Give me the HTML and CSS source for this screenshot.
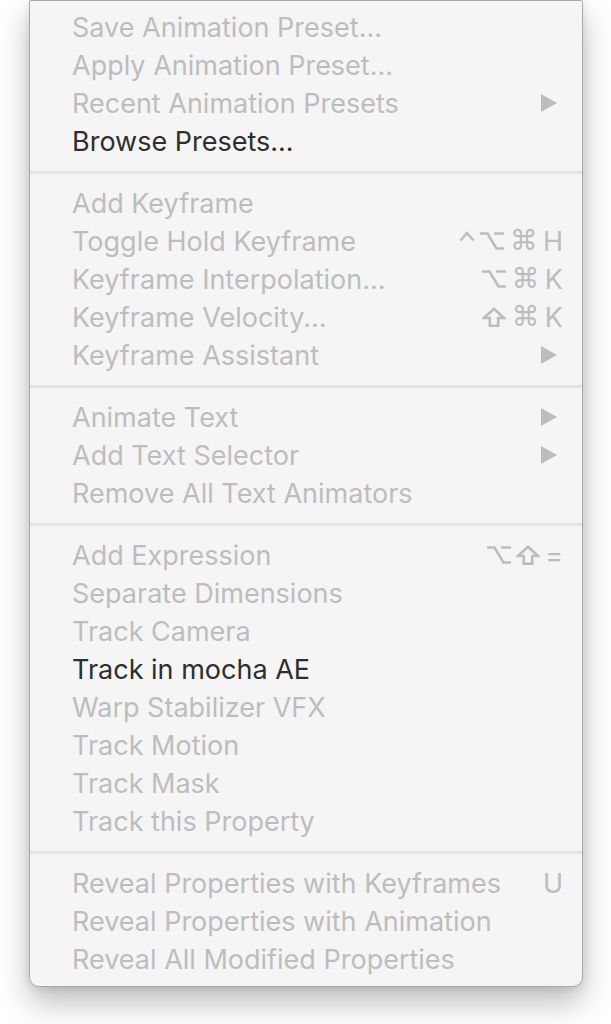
FILE: index.html
```html
<!DOCTYPE html>
<html>
<head>
<meta charset="utf-8">
<link rel="stylesheet" href="styles.css">
</head>
<body>
<div class="menu">
  <div class="group">
    <div class="item dis"><span class="label">Save Animation Preset...</span></div>
    <div class="item dis"><span class="label">Apply Animation Preset...</span></div>
    <div class="item dis"><span class="label">Recent Animation Presets</span><span class="arrow"></span></div>
    <div class="item"><span class="label">Browse Presets...</span></div>
  </div>
  <div class="sep"></div>
  <div class="group">
    <div class="item dis"><span class="label">Add Keyframe</span></div>
    <div class="item dis"><span class="label">Toggle Hold Keyframe</span>
      <span class="key">
        <svg class="ic ctrl" width="16" height="20" viewBox="0 0 16 20"><polyline points="1.5,10.5 8,3 14.5,10.5"/></svg>
        <svg class="ic" width="24" height="20" viewBox="0 0 24 20"><path d="M0 2.5H7.5L16.5 17.5H24M14 2.5H24"/></svg>
        <span class="cmd">⌘</span><span class="ch">H</span>
      </span>
    </div>
    <div class="item dis"><span class="label">Keyframe Interpolation...</span>
      <span class="key">
        <svg class="ic" width="24" height="20" viewBox="0 0 24 20"><path d="M0 2.5H7.5L16.5 17.5H24M14 2.5H24"/></svg>
        <span class="cmd">⌘</span><span class="ch">K</span>
      </span>
    </div>
    <div class="item dis"><span class="label">Keyframe Velocity...</span>
      <span class="key">
        <svg class="ic" width="24" height="20" viewBox="0 0 24 20"><polygon points="12,1.8 22,11 16.2,11 16.2,18.7 7.8,18.7 7.8,11 2,11"/></svg>
        <span class="cmd">⌘</span><span class="ch">K</span>
      </span>
    </div>
    <div class="item dis"><span class="label">Keyframe Assistant</span><span class="arrow"></span></div>
  </div>
  <div class="sep"></div>
  <div class="group">
    <div class="item dis"><span class="label">Animate Text</span><span class="arrow"></span></div>
    <div class="item dis"><span class="label">Add Text Selector</span><span class="arrow"></span></div>
    <div class="item dis"><span class="label">Remove All Text Animators</span></div>
  </div>
  <div class="sep"></div>
  <div class="group">
    <div class="item dis"><span class="label">Add Expression</span>
      <span class="key">
        <svg class="ic" width="24" height="20" viewBox="0 0 24 20"><path d="M0 2.5H7.5L16.5 17.5H24M14 2.5H24"/></svg>
        <svg class="ic" width="24" height="20" viewBox="0 0 24 20"><polygon points="12,1.8 22,11 16.2,11 16.2,18.7 7.8,18.7 7.8,11 2,11"/></svg>
        <span class="ch">=</span>
      </span>
    </div>
    <div class="item dis"><span class="label">Separate Dimensions</span></div>
    <div class="item dis"><span class="label">Track Camera</span></div>
    <div class="item"><span class="label">Track in mocha AE</span></div>
    <div class="item dis"><span class="label">Warp Stabilizer VFX</span></div>
    <div class="item dis"><span class="label">Track Motion</span></div>
    <div class="item dis"><span class="label">Track Mask</span></div>
    <div class="item dis"><span class="label">Track this Property</span></div>
  </div>
  <div class="sep"></div>
  <div class="group">
    <div class="item dis"><span class="label">Reveal Properties with Keyframes</span><span class="key"><span class="ch">U</span></span></div>
    <div class="item dis"><span class="label">Reveal Properties with Animation</span></div>
    <div class="item dis"><span class="label">Reveal All Modified Properties</span></div>
  </div>
</div>
</body>
</html>
```
FILE: styles.css
```css
html, body {
  margin: 0;
  padding: 0;
  background: #ffffff;
}
body {
  font-family: Inter, "Liberation Sans", sans-serif;
  padding-bottom: 40px;
}
.menu {
  margin-left: 29px;
  width: 552px;
  border: 1px solid #a9a9a9;
  border-radius: 2px 2px 10px 10px;
  background: #f5f5f5;
  padding: 7px 0 8px;
  box-shadow: 0 16px 32px rgba(0, 0, 0, 0.26), 0 2px 8px rgba(0, 0, 0, 0.10);
}
.sep {
  height: 3px;
  background: #e3e3e3;
  margin: 11px 0 10px;
}
.item {
  display: flex;
  align-items: center;
  justify-content: space-between;
  height: 38px;
  padding: 0 19px 0 42px;
  font-size: 27px;
  color: #2e2e2e;
}
.item.dis {
  color: #bdbdbd;
}
.key {
  display: flex;
  align-items: center;
  gap: 5px;
  color: #bdbdbd;
}
.ic {
  display: block;
  fill: none;
  stroke: #bdbdbd;
  stroke-width: 2.6;
}
.ic.ctrl {
  margin-top: -2px;
}
.cmd {
  font-family: "DejaVu Sans", sans-serif;
  font-size: 28px;
  line-height: 1;
  margin-left: 1px;
}
.ch {
  font-size: 27px;
  line-height: 1;
}
.arrow {
  width: 0;
  height: 0;
  border-top: 9px solid transparent;
  border-bottom: 9px solid transparent;
  border-left: 16px solid #bdbdbd;
  margin-right: 6px;
}
```
